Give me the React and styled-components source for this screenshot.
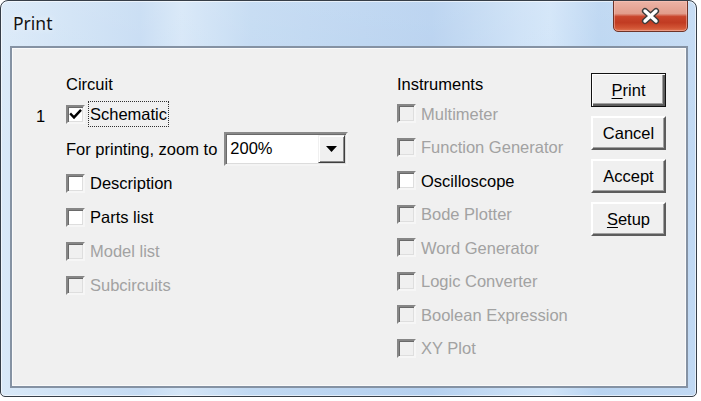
import React from 'react';
import styled, { createGlobalStyle } from 'styled-components';

const GlobalStyle = createGlobalStyle`
  html, body { margin: 0; padding: 0; background: #ffffff; }
  body { font-family: "Liberation Sans", Arial, sans-serif; }
  * { box-sizing: border-box; }
`;

const Window = styled.div`
  width: 697px;
  height: 397px;
  border: 1px solid #363e48;
  border-radius: 8px 8px 5px 5px;
  padding: 0 8px 8px 9px;
  display: flex;
  flex-direction: column;
  background:
    linear-gradient(to bottom, rgba(255,255,255,0.12), rgba(255,255,255,0) 40%),
    linear-gradient(to right, #d9e9f8 0%, #cfe2f5 10%, #c5dbf3 20%, #d5e6f7 26%, #c1d9f2 36%, #b9d3f0 52%, #b5d0ef 62%, #cbe0f6 75%, #d0e4f8 79%, #b9d4f1 86%, #c1d9f3 100%);
  box-shadow: inset 0 0 0 1px rgba(255,255,255,0.6);
  overflow: hidden;
`;

const TitleBar = styled.div`
  height: 45px;
  flex: none;
  display: flex;
  align-items: center;
  padding: 0 0 0 3px;
`;

const Title = styled.div`
  font-family: "Noto Sans", "Open Sans", sans-serif;
  font-size: 17.5px;
  color: #141414;
  text-shadow: 0 0 6px rgba(255,255,255,0.9);
  padding-bottom: 1px;
`;

const CloseButton = styled.div`
  margin-left: auto;
  align-self: flex-start;
  margin-top: -1px;
  width: 75px;
  height: 32px;
  border: 1px solid #6e3328;
  border-radius: 0 0 5px 5px;
  background: linear-gradient(to bottom, #ebb3a6 0%, #e29c8b 42%, #c9452c 52%, #c13b22 72%, #d25535 90%, #df7654 100%);
  box-shadow: inset 0 0 0 1px rgba(255, 205, 195, 0.45);
  display: flex;
  align-items: center;
  justify-content: center;
`;

const Client = styled.div`
  flex: 1;
  display: flex;
  background: #f0f0f0;
  border: 2px solid #8592a3;
  box-shadow: inset 0 0 0 1px #fafafa;
  padding: 25px 0 0 24px;
  font-size: 16.5px;
  color: #000;
`;

const Column = styled.div`
  width: ${p => p.$width}px;
  flex: none;
  display: flex;
  flex-direction: column;
`;

const Heading = styled.div`
  height: 24px;
  padding-top: 1px;
  line-height: 20px;
  margin-left: ${p => p.$indent || 0}px;
`;

const Row = styled.div`
  display: flex;
  align-items: center;
  height: ${p => p.$height}px;
  flex: none;
`;

const NumberCell = styled.div`
  width: 30px;
  flex: none;
  line-height: 20px;
  padding-top: 4px;
`;

const Box = styled.span`
  width: 19px;
  height: 19px;
  flex: none;
  display: inline-flex;
  align-items: center;
  justify-content: center;
  background: ${p => (p.$disabled ? '#f0f0f0' : '#ffffff')};
  border: 2px solid;
  border-color: #868686 #f6f6f6 #f6f6f6 #868686;
  box-shadow: inset 1px 1px 0 #6a6a6a, inset -1px -1px 0 #dedede;
`;

const Label = styled.span`
  margin-left: 3px;
  padding: 2px 1px;
  line-height: 20px;
  border: 1px dotted ${p => (p.$focused ? '#303030' : 'transparent')};
  color: ${p => (p.$disabled ? '#a2a2a2' : '#000')};
  white-space: nowrap;
`;

const PlainLabel = styled.span`
  line-height: 20px;
  white-space: nowrap;
`;

const Combo = styled.div`
  margin-left: 7px;
  width: 124px;
  height: 34px;
  display: flex;
  align-items: stretch;
  background: #fff;
  border: 2px solid;
  border-color: #8a8a8a #f4f4f4 #f4f4f4 #8a8a8a;
  box-shadow: inset 1px 1px 0 #6a6a6a, inset -1px -1px 0 #dcdcdc;
  padding: 1px;
`;

const ComboValue = styled.div`
  flex: 1;
  padding-left: 3px;
  display: flex;
  align-items: center;
`;

const ComboArrow = styled.div`
  width: 27px;
  flex: none;
  background: #f0f0f0;
  border: 1px solid;
  border-color: #f0f0f0 #404040 #404040 #f0f0f0;
  box-shadow: inset 1px 1px 0 #ffffff, inset -1px -1px 0 #8a8a8a;
  display: flex;
  align-items: center;
  justify-content: center;
`;

const ButtonColumn = styled.div`
  width: 75px;
  flex: none;
  display: flex;
  flex-direction: column;
  gap: 9px;
`;

const Button = styled.div`
  height: 34px;
  display: flex;
  align-items: center;
  justify-content: center;
  background: #f0f0f0;
  line-height: 20px;
  ${p =>
    p.$default
      ? `border: 1px solid #111;
         box-shadow: inset 1px 1px 0 #ffffff, inset -2px -2px 0 #5c5c5c, inset -3px -3px 0 #a0a0a0;`
      : `border: 2px solid;
         border-color: #ffffff #5c5c5c #5c5c5c #ffffff;
         box-shadow: inset -1px -1px 0 #a0a0a0;`}
`;

const Mnemonic = styled.span`
  text-decoration: underline;
  text-underline-offset: 2px;
`;

const CheckMark = () => (
  <svg width="13" height="13" viewBox="0 0 13 13">
    <path d="M2 6.3 L5 9.4 L11.2 2.8" fill="none" stroke="#000" strokeWidth="2.4" strokeLinecap="square" />
  </svg>
);

const CloseGlyph = () => (
  <svg width="21" height="18" viewBox="0 0 21 18">
    <path d="M5 4 L16 14 M16 4 L5 14" stroke="#3c3c3c" strokeWidth="6.2" strokeLinecap="round" />
    <path d="M5 4 L16 14 M16 4 L5 14" stroke="#ffffff" strokeWidth="3.4" strokeLinecap="round" />
  </svg>
);

const Arrow = () => (
  <svg width="11" height="6" viewBox="0 0 11 6">
    <path d="M0 0 H11 L5.5 6 Z" fill="#000" />
  </svg>
);

const Check = ({ label, checked, disabled, focused }) => (
  <>
    <Box $disabled={disabled}>{checked && <CheckMark />}</Box>
    <Label $disabled={disabled} $focused={focused}>{label}</Label>
  </>
);

const circuitItems = [
  { label: 'Description' },
  { label: 'Parts list' },
  { label: 'Model list', disabled: true },
  { label: 'Subcircuits', disabled: true },
];

const instruments = [
  { label: 'Multimeter', disabled: true },
  { label: 'Function Generator', disabled: true },
  { label: 'Oscilloscope' },
  { label: 'Bode Plotter', disabled: true },
  { label: 'Word Generator', disabled: true },
  { label: 'Logic Converter', disabled: true },
  { label: 'Boolean Expression', disabled: true },
  { label: 'XY Plot', disabled: true },
];

export default function App() {
  return (
    <>
      <GlobalStyle />
      <Window>
        <TitleBar>
          <Title>Print</Title>
          <CloseButton>
            <CloseGlyph />
          </CloseButton>
        </TitleBar>
        <Client>
          <Column $width={361}>
            <Heading $indent={30}>Circuit</Heading>
            <Row $height={34}>
              <NumberCell>1</NumberCell>
              <Check label="Schematic" checked focused />
            </Row>
            <Row $height={35}>
              <NumberCell />
              <PlainLabel>For printing, zoom to</PlainLabel>
              <Combo>
                <ComboValue>200%</ComboValue>
                <ComboArrow>
                  <Arrow />
                </ComboArrow>
              </Combo>
            </Row>
            {circuitItems.map(item => (
              <Row $height={34} key={item.label}>
                <NumberCell />
                <Check label={item.label} disabled={item.disabled} />
              </Row>
            ))}
          </Column>
          <Column $width={194}>
            <Heading>Instruments</Heading>
            {instruments.map(item => (
              <Row $height={33.5} key={item.label}>
                <Check label={item.label} disabled={item.disabled} />
              </Row>
            ))}
          </Column>
          <ButtonColumn>
            <Button $default>
              <span><Mnemonic>P</Mnemonic>rint</span>
            </Button>
            <Button>Cancel</Button>
            <Button>Accept</Button>
            <Button>
              <span><Mnemonic>S</Mnemonic>etup</span>
            </Button>
          </ButtonColumn>
        </Client>
      </Window>
    </>
  );
}
